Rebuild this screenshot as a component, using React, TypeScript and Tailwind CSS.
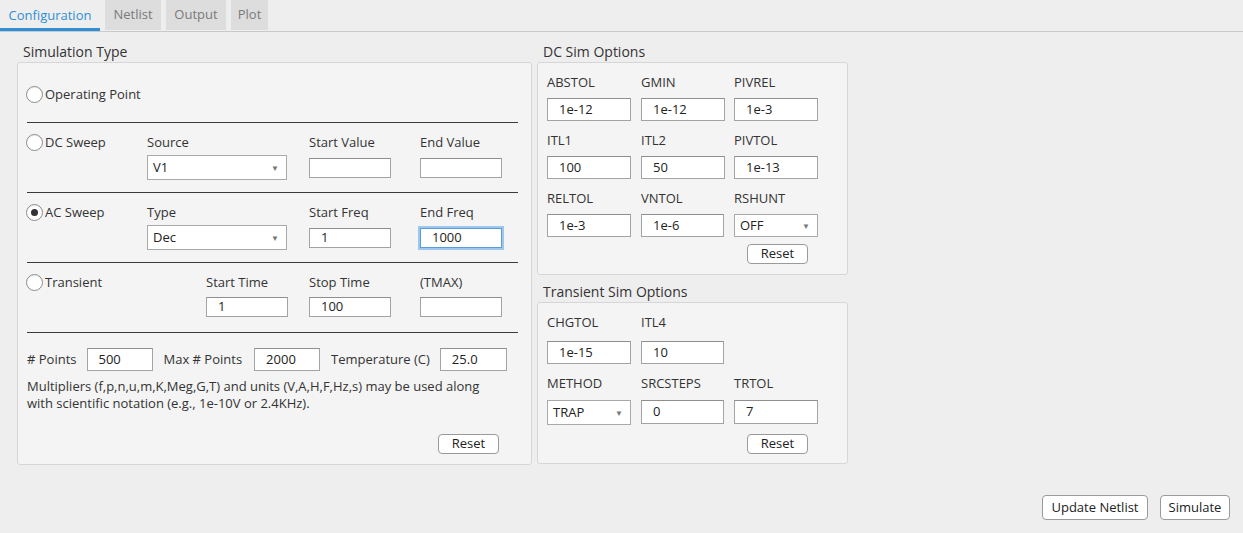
import React from "react";

const font = { fontFamily: '"Open Sans", "Liberation Sans", sans-serif' };

function Radio({ label, checked = false }: { label: string; checked?: boolean }) {
  return (
    <div className="flex items-center h-[16px] text-[13px] text-[#333]">
      <span className="w-[17px] h-[17px] rounded-full border border-[#8c8c8c] bg-white flex items-center justify-center shrink-0 shadow-[inset_0_1px_1px_rgba(0,0,0,0.08)]">
        {checked && <span className="w-[7px] h-[7px] rounded-full bg-[#333]" />}
      </span>
      <span className="ml-[2px] pt-[1px]">{label}</span>
    </div>
  );
}

function Field({ value = "", w = "w-[82px]", h = "h-[20px]", focused = false }: { value?: string; w?: string; h?: string; focused?: boolean }) {
  return (
    <div
      className={
        "bg-white flex items-center pl-[11px] text-[13px] text-[#222] " +
        w + " " + h + " " +
        (focused
          ? "border border-[#5a9bd8] outline outline-2 outline-[#9cc8f0]"
          : "border border-[#a3a3a3] border-t-[#8f8f8f]")
      }
    >
      {value}
    </div>
  );
}

function Dropdown({ value, w = "w-[140px]", h = "h-[25px]" }: { value: string; w?: string; h?: string }) {
  return (
    <div className={"bg-white border border-[#a9a9a9] flex items-center justify-between pl-[5px] pr-[7px] text-[13px] text-[#222] " + w + " " + h}>
      <span>{value}</span>
      <span className="text-[8px] text-[#777]">▼</span>
    </div>
  );
}

function Btn({ label, w }: { label: string; w: string }) {
  return (
    <button className={"h-[20px] bg-white border border-[#9a9a9a] rounded-[4px] text-[13px] text-[#222] flex items-center justify-center " + w}>
      {label}
    </button>
  );
}

function Label({ children }: { children: React.ReactNode }) {
  return <div className="h-[16px] leading-[16px] text-[13px] text-[#333]">{children}</div>;
}

function Sep() {
  return <div className="border-t border-[#3a3a3a] ml-[1px]" />;
}

function SimulationType() {
  return (
    <div className="w-[515px]">
      <div className="h-[20px] leading-[20px] pl-[6px] text-[14px] text-[#333]">Simulation Type</div>
      <div className="bg-[#f4f4f4] border border-[#d6d6d6] rounded-[3px] pl-[8px] pr-[13px] pb-[10px]">
        <div className="pt-[23px] pb-[20px]">
          <Radio label="Operating Point" />
        </div>
        <Sep />
        <div className="grid grid-cols-[121px_162px_111px_1fr] pt-[11px] pb-[12px]">
          <Radio label="DC Sweep" />
          <div>
            <Label>Source</Label>
            <div className="mt-[5px]"><Dropdown value="V1" /></div>
          </div>
          <div>
            <Label>Start Value</Label>
            <div className="mt-[5px] h-[25px] flex items-center"><Field /></div>
          </div>
          <div>
            <Label>End Value</Label>
            <div className="mt-[5px] h-[25px] flex items-center"><Field /></div>
          </div>
        </div>
        <Sep />
        <div className="grid grid-cols-[121px_162px_111px_1fr] pt-[11px] pb-[12px]">
          <Radio label="AC Sweep" checked />
          <div>
            <Label>Type</Label>
            <div className="mt-[5px]"><Dropdown value="Dec" /></div>
          </div>
          <div>
            <Label>Start Freq</Label>
            <div className="mt-[5px] h-[25px] flex items-center"><Field value="1" /></div>
          </div>
          <div>
            <Label>End Freq</Label>
            <div className="mt-[5px] h-[25px] flex items-center"><Field value="1000" focused /></div>
          </div>
        </div>
        <Sep />
        <div className="grid grid-cols-[180px_103px_111px_1fr] pt-[11px] pb-[15px]">
          <Radio label="Transient" />
          <div>
            <Label>Start Time</Label>
            <div className="mt-[7px]"><Field value="1" /></div>
          </div>
          <div>
            <Label>Stop Time</Label>
            <div className="mt-[7px]"><Field value="100" /></div>
          </div>
          <div>
            <Label>(TMAX)</Label>
            <div className="mt-[7px]"><Field /></div>
          </div>
        </div>
        <Sep />
        <div className="pt-[15px] pl-[1px]">
          <div className="flex items-center text-[13px] text-[#333]">
            <span>#&nbsp;Points</span>
            <div className="ml-[10px]"><Field value="500" w="w-[66px]" h="h-[23px]" /></div>
            <span className="ml-[11px]">Max # Points</span>
            <div className="ml-[12px]"><Field value="2000" w="w-[66px]" h="h-[23px]" /></div>
            <span className="ml-[11px]">Temperature (C)</span>
            <div className="ml-[10px]"><Field value="25.0" w="w-[67px]" h="h-[23px]" /></div>
          </div>
          <p className="mt-[7px] w-[475px] text-[13px] leading-[17px] text-[#333]">
            Multipliers (f,p,n,u,m,K,Meg,G,T) and units (V,A,H,F,Hz,s) may be used along with scientific notation (e.g., 1e-10V or 2.4KHz).
          </p>
          <div className="flex justify-end pr-[19px] mt-[22px]">
            <Btn label="Reset" w="w-[61px]" />
          </div>
        </div>
      </div>
    </div>
  );
}

function OptCell({ label, children }: { label: string; children: React.ReactNode }) {
  return (
    <div>
      <Label>{label}</Label>
      {children}
    </div>
  );
}

function DcOptions() {
  const rows: [string, string][][] = [
    [["ABSTOL", "1e-12"], ["GMIN", "1e-12"], ["PIVREL", "1e-3"]],
    [["ITL1", "100"], ["ITL2", "50"], ["PIVTOL", "1e-13"]],
  ];
  return (
    <div>
      <div className="h-[20px] leading-[20px] pl-[6px] text-[14px] text-[#333]">DC Sim Options</div>
      <div className="bg-[#f4f4f4] border border-[#d6d6d6] rounded-[3px] pl-[9px] pt-[11px] pb-[10px]">
        {rows.map((row, i) => (
          <div key={i} className="grid grid-cols-[94px_93px_1fr] mb-[11px]">
            {row.map(([l, v]) => (
              <OptCell key={l} label={l}>
                <div className="mt-[8px]"><Field value={v} w="w-[84px]" h="h-[23px]" /></div>
              </OptCell>
            ))}
          </div>
        ))}
        <div className="grid grid-cols-[94px_93px_1fr]">
          <OptCell label="RELTOL">
            <div className="mt-[8px]"><Field value="1e-3" w="w-[84px]" h="h-[23px]" /></div>
          </OptCell>
          <OptCell label="VNTOL">
            <div className="mt-[8px]"><Field value="1e-6" w="w-[83px]" h="h-[23px]" /></div>
          </OptCell>
          <OptCell label="RSHUNT">
            <div className="mt-[8px]"><Dropdown value="OFF" w="w-[84px]" h="h-[23px]" /></div>
            <div className="mt-[7px] pl-[13px]"><Btn label="Reset" w="w-[61px]" /></div>
          </OptCell>
        </div>
      </div>
    </div>
  );
}

function TransientOptions() {
  return (
    <div className="mt-[7px]">
      <div className="h-[20px] leading-[20px] pl-[6px] text-[14px] text-[#333]">Transient Sim Options</div>
      <div className="bg-[#f4f4f4] border border-[#d6d6d6] rounded-[3px] pl-[9px] pt-[11px] pb-[9px]">
        <div className="grid grid-cols-[94px_93px_1fr] mb-[11px]">
          <OptCell label="CHGTOL">
            <div className="mt-[11px]"><Field value="1e-15" w="w-[84px]" h="h-[23px]" /></div>
          </OptCell>
          <OptCell label="ITL4">
            <div className="mt-[11px]"><Field value="10" w="w-[83px]" h="h-[23px]" /></div>
          </OptCell>
        </div>
        <div className="grid grid-cols-[94px_93px_1fr]">
          <OptCell label="METHOD">
            <div className="mt-[9px]"><Dropdown value="TRAP" w="w-[84px]" h="h-[25px]" /></div>
          </OptCell>
          <OptCell label="SRCSTEPS">
            <div className="mt-[9px]"><Field value="0" w="w-[83px]" h="h-[24px]" /></div>
          </OptCell>
          <OptCell label="TRTOL">
            <div className="mt-[9px]"><Field value="7" w="w-[84px]" h="h-[24px]" /></div>
            <div className="mt-[10px] pl-[13px]"><Btn label="Reset" w="w-[61px]" /></div>
          </OptCell>
        </div>
      </div>
    </div>
  );
}

export default function App() {
  const tabs: [string, string][] = [["Netlist", "w-[56px]"], ["Output", "w-[60px]"], ["Plot", "w-[37px]"]];
  return (
    <div className="w-[1243px] h-[533px] bg-[#eeeeee] overflow-hidden" style={font}>
      <div className="h-[32px] border-b border-[#c9c9c9] flex items-stretch">
        <div className="w-[100px] flex items-center justify-center text-[13px] text-[#2e8fd6] border-b-[3px] border-[#2e8fd6] pt-[3px]">
          Configuration
        </div>
        {tabs.map(([t, w]) => (
          <div key={t} className={"ml-[5px] mb-[1px] bg-[#dddddd] flex items-center justify-center text-[13px] text-[#7a7a7a] " + w}>
            {t}
          </div>
        ))}
      </div>
      <div className="flex gap-[5px] pl-[17px] pt-[10px]">
        <SimulationType />
        <div className="w-[311px]">
          <DcOptions />
          <TransientOptions />
        </div>
      </div>
      <div className="flex justify-end gap-[12px] pr-[13px] mt-[30px]">
        <button className="h-[25px] w-[106px] bg-white border border-[#9a9a9a] rounded-[4px] text-[13px] text-[#222]">Update Netlist</button>
        <button className="h-[25px] w-[70px] bg-white border border-[#9a9a9a] rounded-[4px] text-[13px] text-[#222]">Simulate</button>
      </div>
    </div>
  );
}
